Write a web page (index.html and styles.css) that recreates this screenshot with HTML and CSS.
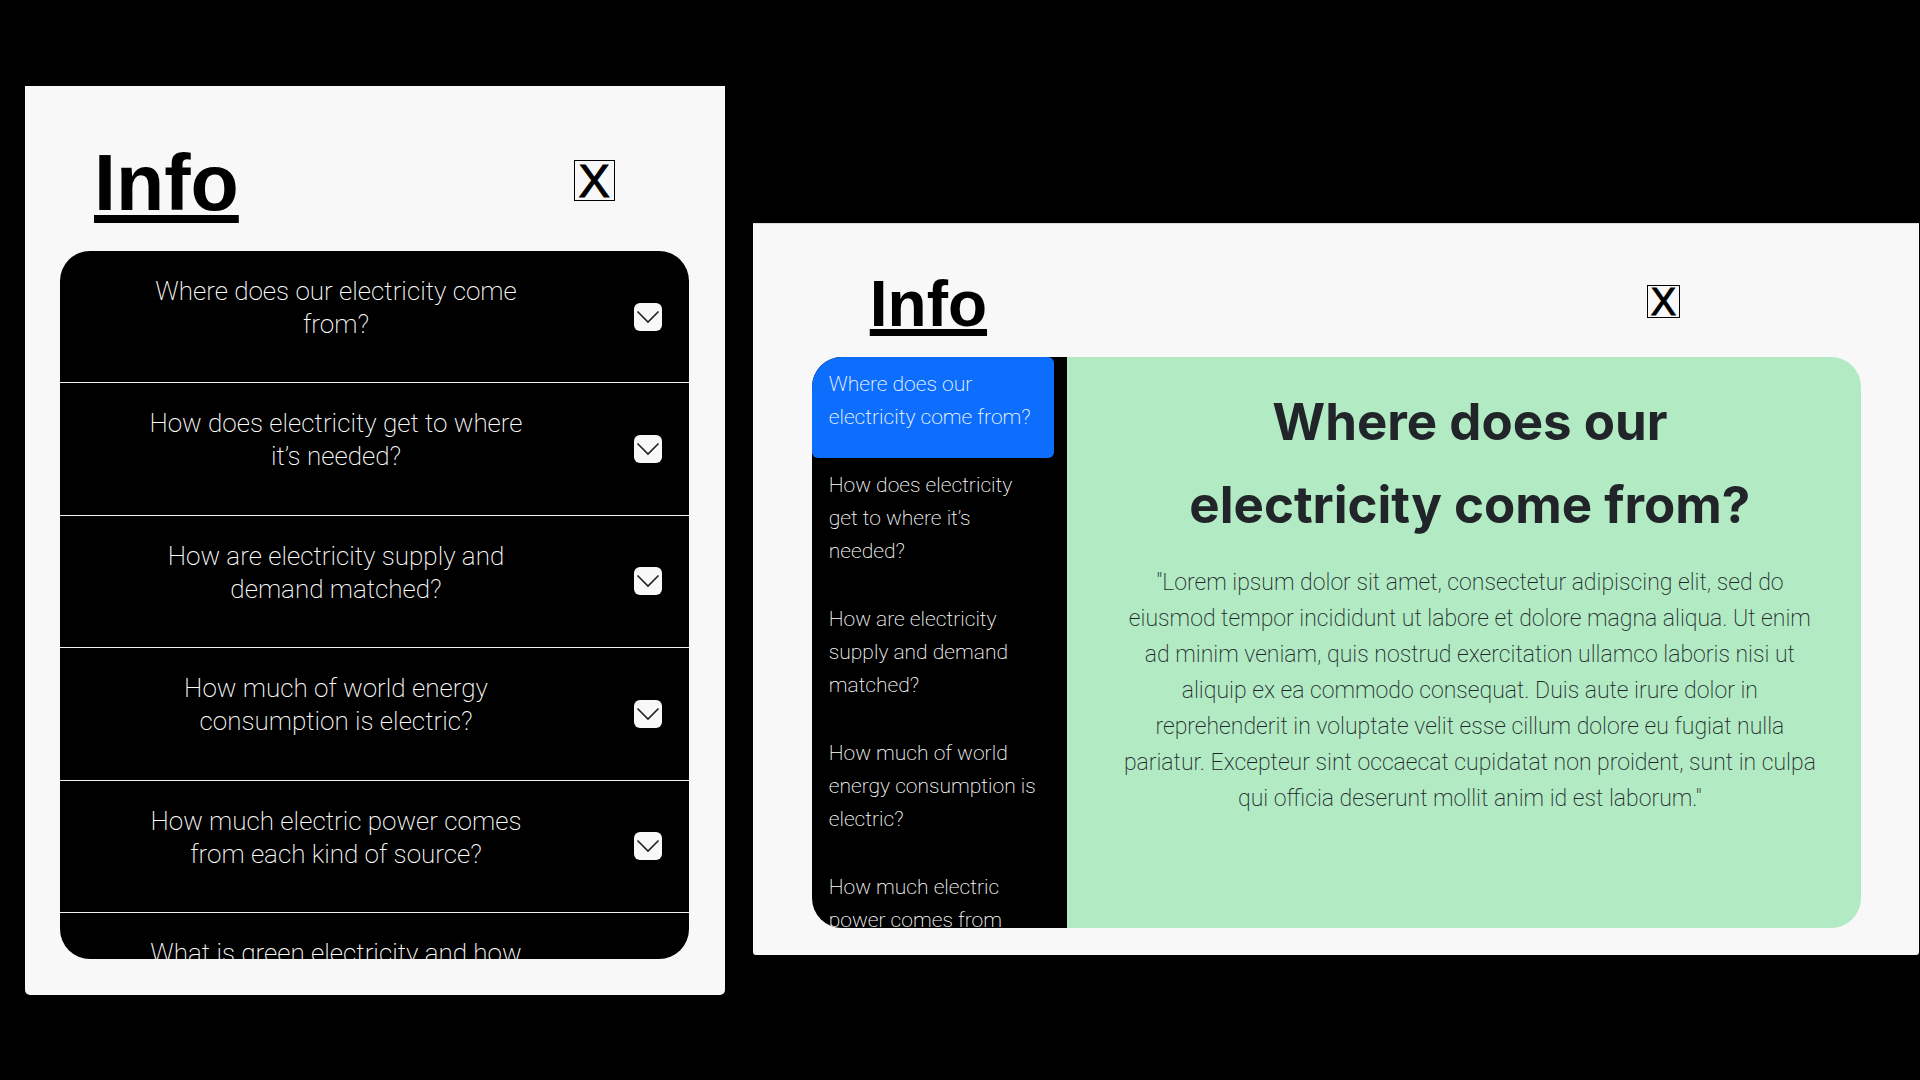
FILE: index.html
```html
<!DOCTYPE html>
<html lang="en">
<head>
<meta charset="utf-8">
<title>Info</title>
<link rel="stylesheet" href="styles.css">
</head>
<body>
<main class="screens">
  <section class="panel panel-narrow">
    <header class="panel-header">
      <h1 class="title">Info</h1>
      <button class="close" type="button" aria-label="Close">X</button>
    </header>
    <div class="accordion">
      <div class="row">
        <h2 class="question">Where does our electricity come from?</h2>
        <button class="toggle" type="button" aria-label="Expand"><svg viewBox="0 0 28 28"><path d="M3.5 8.500 14 19 24.500 8.500"/></svg></button>
      </div>
      <div class="row">
        <h2 class="question">How does electricity get to where it’s needed?</h2>
        <button class="toggle" type="button" aria-label="Expand"><svg viewBox="0 0 28 28"><path d="M3.5 8.500 14 19 24.500 8.500"/></svg></button>
      </div>
      <div class="row">
        <h2 class="question">How are electricity supply and demand matched?</h2>
        <button class="toggle" type="button" aria-label="Expand"><svg viewBox="0 0 28 28"><path d="M3.5 8.500 14 19 24.500 8.500"/></svg></button>
      </div>
      <div class="row">
        <h2 class="question">How much of world energy consumption is electric?</h2>
        <button class="toggle" type="button" aria-label="Expand"><svg viewBox="0 0 28 28"><path d="M3.5 8.500 14 19 24.500 8.500"/></svg></button>
      </div>
      <div class="row">
        <h2 class="question">How much electric power comes from each kind of source?</h2>
        <button class="toggle" type="button" aria-label="Expand"><svg viewBox="0 0 28 28"><path d="M3.5 8.500 14 19 24.500 8.500"/></svg></button>
      </div>
      <div class="row">
        <h2 class="question">What is green electricity and how</h2>
      </div>
    </div>
  </section>

  <section class="panel panel-wide">
    <header class="panel-header">
      <h1 class="title">Info</h1>
      <button class="close" type="button" aria-label="Close">X</button>
    </header>
    <div class="tabs">
      <nav class="tab-list">
        <button class="tab active" type="button">Where does our electricity come from?</button>
        <button class="tab" type="button">How does electricity get to where it’s needed?</button>
        <button class="tab" type="button">How are electricity supply and demand matched?</button>
        <button class="tab" type="button">How much of world energy consumption is electric?</button>
        <button class="tab" type="button">How much electric power comes from</button>
      </nav>
      <article class="content">
        <h2 class="content-title">Where does our<br>electricity come from?</h2>
        <p class="content-text">"Lorem ipsum dolor sit amet, consectetur adipiscing elit, sed do eiusmod tempor incididunt ut labore et dolore magna aliqua. Ut enim ad minim veniam, quis nostrud exercitation ullamco laboris nisi ut aliquip ex ea commodo consequat. Duis aute irure dolor in reprehenderit in voluptate velit esse cillum dolore eu fugiat nulla pariatur. Excepteur sint occaecat cupidatat non proident, sunt in culpa qui officia deserunt mollit anim id est laborum."</p>
      </article>
    </div>
  </section>
</main>
</body>
</html>
```
FILE: styles.css
```css
* {
  box-sizing: border-box;
}

body {
  margin: 0;
  background: #000;
  font-family: Roboto, "Liberation Sans", sans-serif;
}

h1, h2, p {
  margin: 0;
}

button {
  font-family: inherit;
  cursor: pointer;
}

.screens {
  display: grid;
  grid-template-columns: 3fr 5fr;
  align-items: start;
  gap: 28px;
  padding: 86px 1px 0 25px;
}

.panel {
  background: #f8f8f8;
}

.panel-header {
  display: flex;
  justify-content: space-between;
  align-items: flex-start;
}

.title {
  color: #000;
  font-family: "Liberation Sans", Arial, sans-serif;
  font-weight: 700;
  text-decoration: underline;
  text-decoration-skip-ink: none;
}

.close {
  display: flex;
  justify-content: center;
  align-items: center;
  padding: 0;
  border: 1px solid #000;
  background: none;
  color: #000;
  font-family: "Liberation Sans", Arial, sans-serif;
  -webkit-text-stroke: 1px #000;
}

/* Narrow screen: accordion */
.panel-narrow {
  padding: 54px 36px 36px 35px;
  border-radius: 0 0 5px 5px;
}

.panel-narrow .panel-header {
  height: 111px;
  padding: 0 74px 0 34px;
}

.panel-narrow .title {
  font-size: 79px;
  line-height: 86px;
  text-decoration-thickness: 8px;
  text-underline-offset: 5px;
}

.panel-narrow .close {
  width: 41px;
  height: 41px;
  margin-top: 20px;
  font-size: 47px;
  line-height: 38px;
}

.accordion {
  display: grid;
  grid-template-rows: repeat(5, 1fr) 46px;
  height: 708px;
  overflow: hidden;
  border-radius: 30px;
  background: #000;
}

.row {
  display: flex;
  justify-content: space-between;
  align-items: center;
  min-height: 0;
  padding: 0 27px 0 76px;
  border-bottom: 1px solid #f0f2f1;
}

.row:last-child {
  border-bottom: 0;
}

.question {
  align-self: flex-start;
  width: 400px;
  padding-top: 24px;
  color: #fff;
  font-size: 26px;
  font-weight: 200;
  line-height: 33px;
  text-align: center;
}

.toggle {
  width: 28px;
  height: 28px;
  padding: 0;
  border: 0;
  border-radius: 6px;
  background: #f8f8f8;
}

.toggle svg {
  display: block;
  fill: none;
  stroke: #222;
  stroke-width: 1.6;
}

/* Wide screen: side tabs */
.panel-wide {
  margin-top: 137px;
  padding: 44px 58px 27px 59px;
  border-top: 1px solid #ddd;
  border-radius: 0 0 3px 3px;
}

.panel-wide .panel-header {
  height: 89px;
  padding: 0 181px 0 58px;
}

.panel-wide .title {
  font-size: 64px;
  line-height: 72px;
  text-decoration-thickness: 7px;
  text-underline-offset: 3px;
}

.panel-wide .close {
  width: 33px;
  height: 33px;
  margin-top: 17px;
  font-size: 38px;
  line-height: 30px;
}

.tabs {
  display: grid;
  grid-template-columns: 255px 1fr;
  height: 571px;
  overflow: hidden;
  border-radius: 30px;
}

.tab-list {
  display: flex;
  flex-direction: column;
  height: 571px;
  padding-right: 13px;
  overflow: hidden;
  background: #000;
}

.tab {
  flex: none;
  padding: 11px 16px 24px 17px;
  border: 0;
  border-radius: 6px;
  background: none;
  color: #fff;
  font-size: 21px;
  font-weight: 200;
  line-height: 33px;
  text-align: left;
}

.tab.active {
  background: #0d6efd;
}

.content {
  padding: 23px 42px 24px 54px;
  background: #b1eac3;
  color: #212529;
  text-align: center;
}

.content-title {
  font-family: Inter, "Liberation Sans", sans-serif;
  font-size: 51px;
  font-weight: 700;
  line-height: 83px;
}

.content-text {
  padding-top: 19px;
  font-size: 23px;
  font-weight: 200;
  line-height: 36px;
}
```
